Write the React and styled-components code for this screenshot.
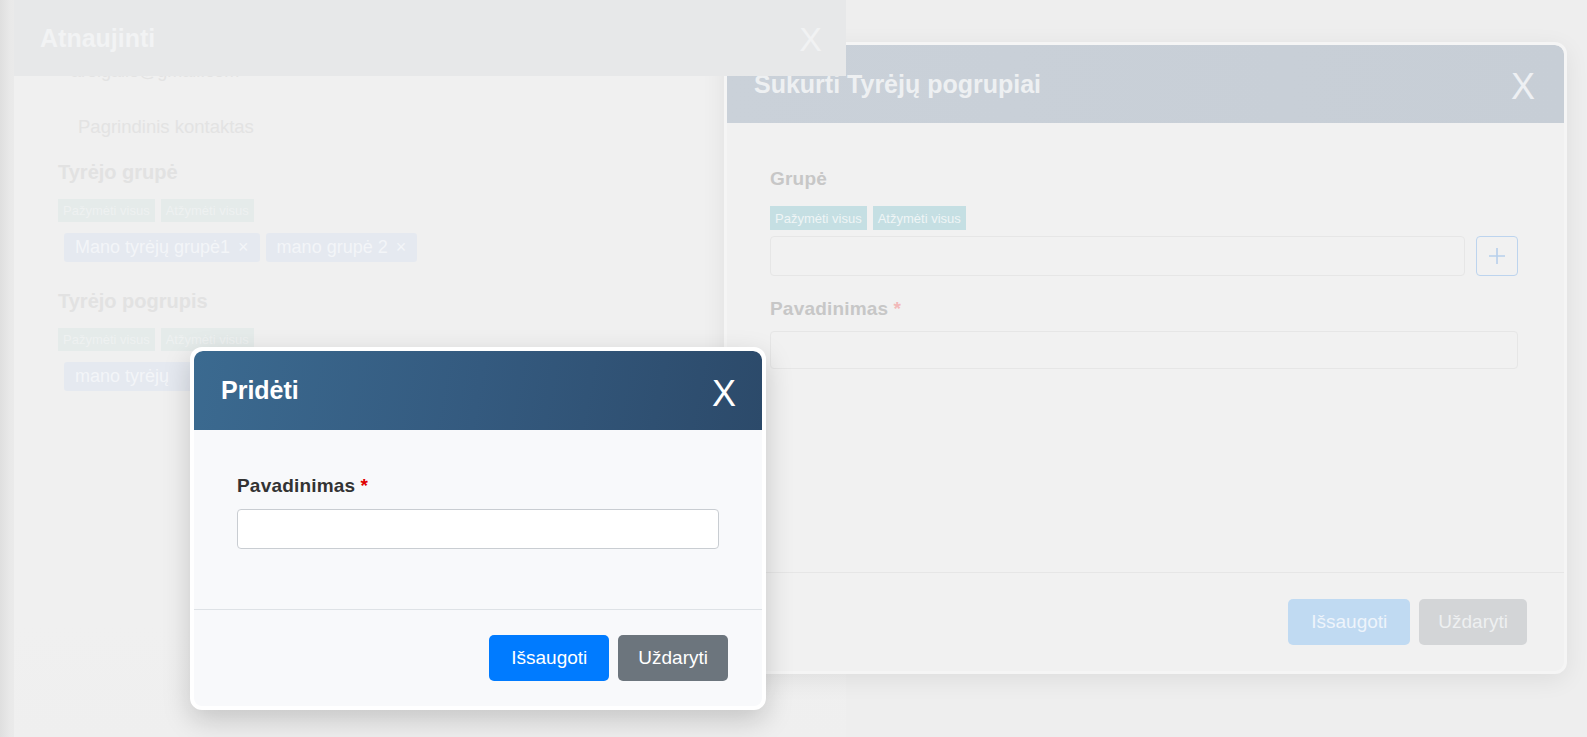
import React from 'react'
import styled, { createGlobalStyle } from 'styled-components'

const GlobalStyle = createGlobalStyle`
  html, body {
    margin: 0;
    padding: 0;
    background: #eeeeee;
    font-family: "Liberation Sans", Arial, sans-serif;
    overflow: hidden;
  }
  * { box-sizing: border-box; }
`

const Desktop = styled.div`
  position: relative;
  width: 100vw;
  height: 100vh;
  overflow: hidden;
  background: linear-gradient(90deg, #dfdfdf 0, #e9e9e9 10px, #eeeeee 30px);
`

/* ---------- back window (Atnaujinti) ---------- */

const BackWindow = styled.div`
  position: absolute;
  left: 14px;
  top: 0;
  bottom: 0;
  width: 832px;
  background: linear-gradient(180deg, #f0f0f0 85%, #efefef 100%);
  display: flex;
  flex-direction: column;
  overflow: hidden;
`

const BackHeader = styled.div`
  position: relative;
  z-index: 1;
  height: 76px;
  flex: none;
  display: flex;
  align-items: center;
  justify-content: space-between;
  padding: 0 24px 0 26px;
  background: #e7e8e9;
`

const BackTitle = styled.div`
  font-size: 25px;
  font-weight: bold;
  color: #f2f3f4;
`

const BackClose = styled.div`
  font-size: 34px;
  color: #f1f2f3;
  margin-top: 2px;
`

const BackBody = styled.div`
  padding: 0 44px;
  display: flex;
  flex-direction: column;
`

const Email = styled.div`
  margin-top: -15px;
  padding-left: 13px;
  font-size: 18px;
  line-height: 21px;
  color: #e3e3e3;
`

const MainContact = styled.div`
  margin-top: 34px;
  padding-left: 20px;
  font-size: 18.5px;
  line-height: 21px;
  color: #e3e3e3;
`

const BackSection = styled.div`
  margin-top: ${p => p.$top}px;
  display: flex;
  flex-direction: column;
`

const BackLabel = styled.div`
  font-size: 20px;
  line-height: 23px;
  font-weight: bold;
  color: #e2e2e2;
  margin-bottom: 15px;
`

const BackToggles = styled.div`
  display: flex;
  gap: 6px;
`

const BackToggle = styled.div`
  height: 23px;
  padding: 0 5px;
  display: flex;
  align-items: center;
  font-size: 13px;
  color: #eef1f1;
  background: #e5ebea;
`

const ChipRow = styled.div`
  display: flex;
  gap: 6px;
  margin-top: 11px;
  padding-left: 6px;
`

const Chip = styled.div`
  height: 29px;
  min-width: ${p => p.$minWidth || 0}px;
  padding: 0 11px;
  display: flex;
  align-items: center;
  gap: 8px;
  font-size: 18px;
  color: #f3f5f8;
  background: #e5e9f0;
  border-radius: 3px;
`

/* ---------- shared modal parts ---------- */

const Window = styled.div`
  position: absolute;
  left: ${p => p.$left}px;
  top: ${p => p.$top}px;
  width: ${p => p.$width}px;
  display: flex;
  flex-direction: column;
  border: ${p => p.$frame};
  border-radius: 12px;
  background: ${p => p.$bg};
  box-shadow: ${p => p.$shadow};
  overflow: hidden;
`

const Header = styled.div`
  height: ${p => p.$height}px;
  display: flex;
  align-items: center;
  justify-content: space-between;
  padding: 0 ${p => p.$padRight}px 0 27px;
  background: ${p => p.$bg};
  border-radius: 9px 9px 0 0;
`

const Title = styled.div`
  font-size: 25px;
  font-weight: bold;
  color: ${p => p.$color};
`

const Close = styled.div`
  font-size: 36px;
  line-height: 1;
  color: ${p => p.$color};
  margin-top: 6px;
`

const Body = styled.div`
  height: ${p => p.$height}px;
  padding: ${p => p.$padTop}px ${p => p.$padRight}px 0 43px;
  display: flex;
  flex-direction: column;
`

const Label = styled.div`
  font-size: 19px;
  font-weight: bold;
  letter-spacing: 0.2px;
  color: ${p => p.$color};
  line-height: 22px;
`

const Required = styled.span`
  color: ${p => p.$color};
  margin-left: 5px;
`

const Input = styled.div`
  height: ${p => p.$height}px;
  margin-top: ${p => p.$gap}px;
  flex: ${p => (p.$grow ? 1 : 'none')};
  background: ${p => p.$bg};
  border: 1px solid ${p => p.$border};
  border-radius: 4px;
`

const Footer = styled.div`
  height: ${p => p.$height}px;
  display: flex;
  justify-content: flex-end;
  align-items: flex-start;
  gap: 9px;
  padding: ${p => p.$padTop}px ${p => p.$padRight}px 0 0;
  border-top: 1px solid ${p => p.$line};
`

const Button = styled.div`
  height: 46px;
  padding: 0 ${p => p.$pad}px;
  display: flex;
  align-items: center;
  font-size: 19px;
  color: ${p => p.$color};
  background: ${p => p.$bg};
  border-radius: 5px;
`

/* ---------- middle modal (Sukurti) parts ---------- */

const ToggleRow = styled.div`
  display: flex;
  gap: 6px;
  margin-top: 16px;
`

const Toggle = styled.div`
  height: 24px;
  padding: 0 5px;
  display: flex;
  align-items: center;
  font-size: 13px;
  color: #eff5f6;
  background: #c5dfe3;
`

const SelectRow = styled.div`
  display: flex;
  gap: 11px;
  margin-top: 6px;
`

const AddButton = styled.div`
  width: 42px;
  height: 40px;
  display: flex;
  align-items: center;
  justify-content: center;
  border: 1px solid #bdd4ee;
  border-radius: 4px;
`

const Spacer = styled.div`
  height: ${p => p.$h}px;
`

export default function App() {
  return (
    <>
      <GlobalStyle />
      <Desktop>
        <BackWindow>
          <BackHeader>
            <BackTitle>Atnaujinti</BackTitle>
            <BackClose>X</BackClose>
          </BackHeader>
          <BackBody>
            <Email>arelgaile@gmail.com</Email>
            <MainContact>Pagrindinis kontaktas</MainContact>
            <BackSection $top={24}>
              <BackLabel>Tyrėjo grupė</BackLabel>
              <BackToggles>
                <BackToggle>Pažymėti visus</BackToggle>
                <BackToggle>Atžymėti visus</BackToggle>
              </BackToggles>
              <ChipRow>
                <Chip>Mano tyrėjų grupė1 <span>×</span></Chip>
                <Chip>mano grupė 2 <span>×</span></Chip>
              </ChipRow>
            </BackSection>
            <BackSection $top={28}>
              <BackLabel>Tyrėjo pogrupis</BackLabel>
              <BackToggles>
                <BackToggle>Pažymėti visus</BackToggle>
                <BackToggle>Atžymėti visus</BackToggle>
              </BackToggles>
              <ChipRow>
                <Chip $minWidth={160}>mano tyrėjų</Chip>
              </ChipRow>
            </BackSection>
          </BackBody>
        </BackWindow>

        <Window
          $left={724}
          $top={42}
          $width={843}
          $frame="3px solid #f5f5f5"
          $bg="#f1f1f1"
          $shadow="0 6px 24px rgba(0,0,0,0.07)"
        >
          <Header $height={78} $padRight={29} $bg="linear-gradient(90deg, #cad1d9, #c7ced6)">
            <Title $color="#eef0f2">Sukurti Tyrėjų pogrupiai</Title>
            <Close $color="#eef0f3">X</Close>
          </Header>
          <Body $height={449} $padTop={45} $padRight={46}>
            <Label $color="#c7c7c7">Grupė</Label>
            <ToggleRow>
              <Toggle>Pažymėti visus</Toggle>
              <Toggle>Atžymėti visus</Toggle>
            </ToggleRow>
            <SelectRow>
              <Input $height={40} $gap={0} $grow $bg="#f1f1f1" $border="#e6e6e6" />
              <AddButton>
                <svg width="18" height="18" viewBox="0 0 18 18">
                  <path d="M9 1v16M1 9h16" stroke="#b7cfeb" strokeWidth="1.6" fill="none" />
                </svg>
              </AddButton>
            </SelectRow>
            <Spacer $h={22} />
            <Label $color="#c7c7c7">
              Pavadinimas<Required $color="#f2b9b9">*</Required>
            </Label>
            <Input $height={38} $gap={11} $bg="#f1f1f1" $border="#e6e6e6" />
          </Body>
          <Footer $height={99} $padTop={26} $padRight={37} $line="#e6e6e6">
            <Button $pad={23} $bg="#c0daf2" $color="#eef4fb">Išsaugoti</Button>
            <Button $pad={19} $bg="#d3d5d7" $color="#eef0f1">Uždaryti</Button>
          </Footer>
        </Window>

        <Window
          $left={190}
          $top={347}
          $width={576}
          $frame="4px solid #ffffff"
          $bg="#f8f9fb"
          $shadow="0 10px 28px rgba(0,0,0,0.18)"
        >
          <Header $height={79} $padRight={26} $bg="linear-gradient(100deg, #3b6a90 0%, #345a7f 50%, #2c4a6a 100%)">
            <Title $color="#ffffff">Pridėti</Title>
            <Close $color="#ffffff">X</Close>
          </Header>
          <Body $height={179} $padTop={45} $padRight={43}>
            <Label $color="#333333">
              Pavadinimas<Required $color="#e00000">*</Required>
            </Label>
            <Input $height={40} $gap={12} $bg="#ffffff" $border="#c9cdd2" />
          </Body>
          <Footer $height={97} $padTop={25} $padRight={34} $line="#dee2e6">
            <Button $pad={22} $bg="#007bff" $color="#ffffff">Išsaugoti</Button>
            <Button $pad={20} $bg="#6c757d" $color="#ffffff">Uždaryti</Button>
          </Footer>
        </Window>
      </Desktop>
    </>
  )
}
